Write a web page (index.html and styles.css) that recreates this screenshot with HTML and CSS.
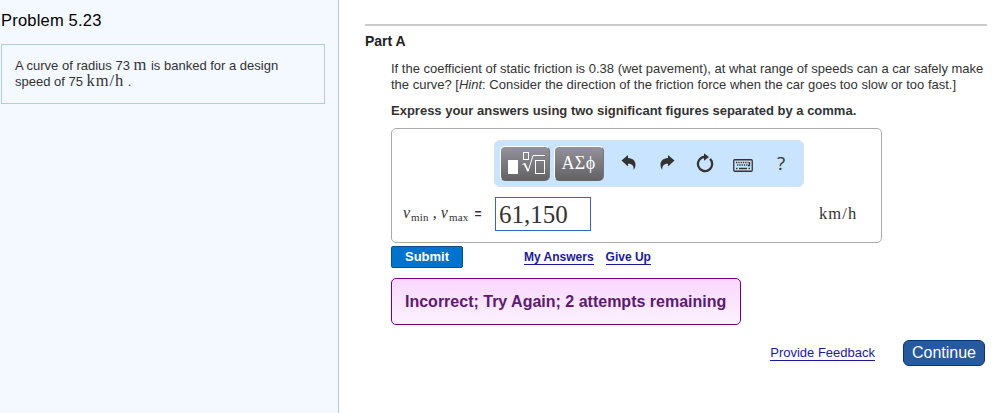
FILE: index.html
```html
<!DOCTYPE html>
<html lang="en">
<head>
    <meta charset="UTF-8">
    <meta name="viewport" content="width=device-width, initial-scale=1.0">
    <title>Problem 5.23</title>
    <link rel="stylesheet" href="styles.css">
</head>
<body>
    <aside class="sidebar">
        <h1>Problem 5.23</h1>
        <div class="problem">
            A curve of radius 73 <span class="math">m</span> is banked for a design<br>
            speed of 75 <span class="math wide">km/h</span> .
        </div>
    </aside>
    <main class="content">
        <hr>
        <h2>Part A</h2>
        <div class="part">
            <p class="question">If the coefficient of static friction is 0.38 (wet pavement), at what range of speeds can a car safely make<br>
            the curve? [<i>Hint</i>: Consider the direction of the friction force when the car goes too slow or too fast.]</p>
            <p class="instruction">Express your answers using two significant figures separated by a comma.</p>
            <div class="answer-box">
                <div class="toolbar">
                    <button class="tool-btn" aria-label="Templates">
                        <svg width="48" height="32" viewBox="0 0 48 32" fill="none" stroke="#fff">
                            <rect x="7" y="12" width="10" height="14" fill="#fff" stroke="none"/>
                            <rect x="22.500" y="4.500" width="5" height="7"/>
                            <path d="M21.500 16.500l2-1"/>
                            <path d="M23.500 15.500l3.500 7.500" stroke-width="1.800"/>
                            <path d="M27 23.500l5-16h12"/>
                            <rect x="34.500" y="12.500" width="9" height="13"/>
                        </svg>
                    </button>
                    <button class="tool-btn symbols">ΑΣϕ</button>
                    <svg class="icon undo" width="16" height="16" viewBox="0 0 16 16" fill="#333">
                        <path d="M.5 5.500L7 0v3c5 .3 7.500 3 7.500 6.500 0 2.300-.6 4-1.800 5.500.3-3.500-1-6.200-5.700-6.200v2.700z"/>
                    </svg>
                    <svg class="icon redo" width="16" height="16" viewBox="0 0 16 16" fill="#333">
                        <path d="M15.500 5.500L9 0v3c-5 .3-7.500 3-7.500 6.500 0 2.300.6 4 1.800 5.500-.3-3.500 1-6.200 5.700-6.200v2.700z"/>
                    </svg>
                    <svg class="icon reset" width="18" height="20" viewBox="0 0 18 20" fill="none">
                        <path d="M14 5.900A7.100 7.100 0 1 1 8.500 3.900" stroke="#333" stroke-width="2.200"/>
                        <path d="M8 0.300L13 4 8 7.700z" fill="#333"/>
                    </svg>
                    <svg class="keyboard" width="20" height="13" viewBox="0 0 20 13" fill="none" stroke="#333">
                        <rect x=".75" y=".75" width="18.500" height="11.500" rx="1" stroke-width="1.300"/>
                        <path d="M3 3.500h12.500M4 6h11" stroke-width="1.400" stroke-dasharray="1.300 1"/>
                        <path d="M16.500 3v3.500H15M3 9.500h1.500M6 9.500h8M15.500 9.500H17" stroke-width="1.300"/>
                    </svg>
                    <span class="help">?</span>
                </div>
                <div class="answer-row">
                    <label class="vars"><i>v</i><sub>min</sub> , <i>v</i><sub>max</sub> <b class="eq">=</b></label>
                    <div class="field">61,150</div>
                    <span class="unit">km/h</span>
                </div>
            </div>
            <div class="actions">
                <button class="submit">Submit</button>
                <a class="answers" href="#">My Answers</a>
                <a href="#">Give Up</a>
            </div>
            <div class="feedback">Incorrect; Try Again; 2 attempts remaining</div>
        </div>
        <div class="footer">
            <a href="#">Provide Feedback</a>
            <button class="continue">Continue</button>
        </div>
    </main>
</body>
</html>
```
FILE: styles.css
```css
* {
    box-sizing: border-box;
}

body {
    display: flex;
    height: 413px;
    margin: 0;
    overflow: hidden;
    font-family: "Liberation Sans", Arial, sans-serif;
    font-size: 13px;
    line-height: 16px;
    color: #333;
    background-color: #fff;
}

button {
    padding: 0;
    font-family: inherit;
    cursor: pointer;
}

svg {
    display: block;
}

a {
    color: #1a1a9c;
    text-decoration: none;
    border-bottom: 1px solid #1a1a9c;
    line-height: 14px;
}

.sidebar {
    width: 339px;
    flex: none;
    padding: 11px 13px 0 1px;
    background-color: #f4f8ff;
    border-right: 1px solid #b4cbdf;
}

h1 {
    margin: 0 0 14px;
    font-size: 16.5px;
    line-height: 19px;
    font-weight: normal;
    letter-spacing: 0.2px;
    color: #000;
}

.problem {
    width: 324px;
    height: 60px;
    padding: 13px;
    border: 1px solid #b4cbdf;
    white-space: nowrap;
}

.math {
    margin-right: 1px;
    font-family: "Liberation Serif", serif;
    font-size: 16.5px;
    line-height: 10px;
}

.wide {
    margin-right: 0;
    letter-spacing: 0.9px;
}

.content {
    flex: 1;
    padding: 24px 14px 0 26px;
}

hr {
    height: 2px;
    margin: 0;
    border: none;
    background-color: #ccc;
}

h2 {
    margin: 7px 0 12px;
    font-size: 14px;
    line-height: 16px;
    color: #222;
}

.part {
    padding-left: 26px;
}

.question {
    margin: 0;
    white-space: nowrap;
}

.instruction {
    margin: 10px 0 9px;
    font-weight: bold;
}

.answer-box {
    width: 491px;
    height: 115px;
    padding-top: 11px;
    border: 1px solid #aaa;
    border-radius: 5px;
}

.toolbar {
    display: flex;
    align-items: center;
    width: 310px;
    height: 47px;
    margin-left: 102px;
    padding-left: 5px;
    background-color: #c9e4ff;
    border: 1px solid #dcdfe3;
    border-radius: 6px;
}

.tool-btn {
    width: 50px;
    height: 35px;
    margin-right: 4px;
    border: 1px solid #fff;
    border-right-color: #777;
    border-bottom-color: #666;
    border-radius: 5px;
    background: linear-gradient(#94929b, #626264);
    color: #fff;
}

.symbols {
    padding: 0 1px 1px 0;
    font-family: "Liberation Serif", serif;
    font-size: 18px;
    letter-spacing: 0.3px;
}

.icon {
    margin-bottom: 2px;
}

.undo {
    margin-left: 13px;
}

.redo {
    margin-left: 22px;
}

.reset {
    margin-left: 21px;
}

.keyboard {
    margin: 4px 0 0 19px;
}

.help {
    margin: 0 0 2px 24px;
    font-family: "Open Sans", "Noto Sans", sans-serif;
    font-size: 19px;
}

.answer-row {
    display: flex;
    align-items: center;
    height: 34px;
    margin-top: 10px;
    padding-left: 11px;
}

.vars {
    width: 92px;
    padding-bottom: 2px;
    font-family: "Liberation Serif", serif;
    font-size: 16px;
    white-space: nowrap;
}

.vars i {
    margin-right: 1px;
}

.vars sub {
    font-size: 11px;
    line-height: 0;
    vertical-align: -3px;
    letter-spacing: 0.2px;
}

.eq {
    margin-left: 2px;
    font-family: "Liberation Sans", Arial, sans-serif;
    font-size: 12px;
}

.field {
    width: 96px;
    height: 34px;
    padding-left: 3px;
    border: 1px solid #3b5fcc;
    font-family: "Liberation Serif", serif;
    font-size: 25px;
    line-height: 33px;
}

.unit {
    margin-left: 228px;
    font-family: "Liberation Serif", serif;
    font-size: 16.5px;
    letter-spacing: 1.1px;
}

.actions {
    display: flex;
    align-items: center;
    gap: 12px;
    margin-top: 3px;
    font-size: 12px;
    font-weight: bold;
}

.actions a {
    line-height: 13px;
    margin-top: 1px;
}

.submit {
    width: 72px;
    height: 22px;
    padding-bottom: 2px;
    border: 1px solid #0a4f87;
    border-radius: 2px;
    background-color: #0073cf;
    color: #fff;
    font-size: 13px;
    font-weight: bold;
}

.answers {
    margin-left: 49px;
}

.feedback {
    width: 350px;
    height: 47px;
    margin-top: 10px;
    padding-left: 13px;
    border: 1px solid #770077;
    border-radius: 5px;
    background: linear-gradient(#f9d7ff, #fdf1ff);
    color: #5c1a6e;
    font-size: 16px;
    font-weight: bold;
    line-height: 45px;
    white-space: nowrap;
}

.footer {
    display: flex;
    justify-content: flex-end;
    align-items: center;
    gap: 28px;
    margin: 15px 2px 0 0;
}

.footer a {
    padding-top: 1px;
}

.continue {
    width: 82px;
    height: 26px;
    border: 1px solid #08366d;
    border-radius: 6px;
    background-color: #26599d;
    color: #fff;
    font-size: 16px;
}
```
